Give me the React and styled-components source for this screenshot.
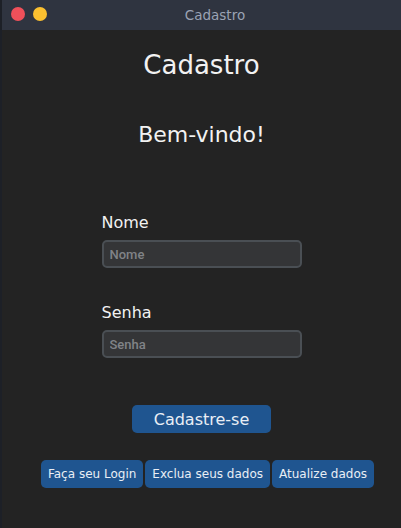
import React from "react";
import styled, { createGlobalStyle } from "styled-components";

const GlobalStyle = createGlobalStyle`
    html, body {
        margin: 0;
        padding: 0;
        background: #232323;
    }

    * {
        box-sizing: border-box;
    }
`;

const Screen = styled.div`
    width: 401px;
    height: 528px;

    display: flex;
    overflow: hidden;

    background: #1d2027;
`;

const Window = styled.div`
    flex: 1;
    margin-left: 2px;

    display: flex;
    flex-direction: column;

    background: #232323;
`;

const TitleBar = styled.div`
    height: 30px;
    flex-shrink: 0;

    display: flex;
    align-items: center;

    padding-left: 9px;

    background: #2f3440;
`;

const Light = styled.span`
    width: 14px;
    height: 14px;
    border-radius: 50%;
    margin-right: 8px;
    margin-top: -2px;

    background: ${props => props.color};
`;

const TitleText = styled.span`
    flex: 1;
    text-align: center;
    padding-right: 26px;
    margin-top: -1px;

    font-family: "DejaVu Sans", sans-serif;
    font-size: 13.5px;
    color: #9ba3b4;
`;

const Content = styled.main`
    flex: 1;

    display: flex;
    flex-direction: column;
    align-items: center;

    padding-top: 20px;
    font-family: "DejaVu Sans", sans-serif;
    color: #f2f2f2;
`;

const Heading = styled.h1`
    margin: 0;
    font-size: 26px;
    font-weight: 400;
    line-height: 30px;
`;

const Welcome = styled.h2`
    margin: 42px 0 0;
    font-size: 22px;
    font-weight: 400;
    line-height: 26px;
`;

const Form = styled.form`
    width: 200px;
    margin-top: 65px;

    display: flex;
    flex-direction: column;
`;

const Label = styled.label`
    font-size: 16px;
    line-height: 20px;
    color: #f2f2f2;
    margin-top: ${props => props.$gap || 0}px;
`;

const Input = styled.input`
    width: 200px;
    height: 28px;
    margin-top: 7px;
    padding: 0 6px;

    border: 2px solid #4a4f54;
    border-radius: 5px;
    background: #343537;
    outline: none;

    font-family: Roboto, "Liberation Sans", sans-serif;
    font-size: 13px;
    font-weight: 500;
    color: #e0e0e0;

    &::placeholder {
        color: #808387;
    }
`;

const Button = styled.button`
    height: 28px;
    padding: 0 ${props => props.$pad || 7}px;
    border: none;
    border-radius: 5px;

    background: #1f5590;
    color: #e9eef5;
    font-family: "DejaVu Sans", sans-serif;
    font-size: ${props => props.$size || 12}px;
    cursor: pointer;
`;

const SignUp = styled(Button)`
    width: 139px;
    margin-top: 47px;
`;

const LinkRow = styled.div`
    display: flex;
    gap: 2px;
    margin-top: 27px;
    margin-left: 12px;
`;

const App = () => {
    return (
        <>
            <GlobalStyle />
            <Screen>
                <Window>
                    <TitleBar>
                        <Light color="#f0505a" />
                        <Light color="#fbc030" />
                        <TitleText>Cadastro</TitleText>
                    </TitleBar>

                    <Content>
                        <Heading>Cadastro</Heading>
                        <Welcome>Bem-vindo!</Welcome>

                        <Form onSubmit={e => e.preventDefault()}>
                            <Label htmlFor="nome">Nome</Label>
                            <Input id="nome" placeholder="Nome" />

                            <Label htmlFor="senha" $gap={35}>Senha</Label>
                            <Input id="senha" type="password" placeholder="Senha" />
                        </Form>

                        <SignUp $size={16}>Cadastre-se</SignUp>

                        <LinkRow>
                            <Button>Faça seu Login</Button>
                            <Button>Exclua seus dados</Button>
                            <Button>Atualize dados</Button>
                        </LinkRow>
                    </Content>
                </Window>
            </Screen>
        </>
    );
};

export default App;
